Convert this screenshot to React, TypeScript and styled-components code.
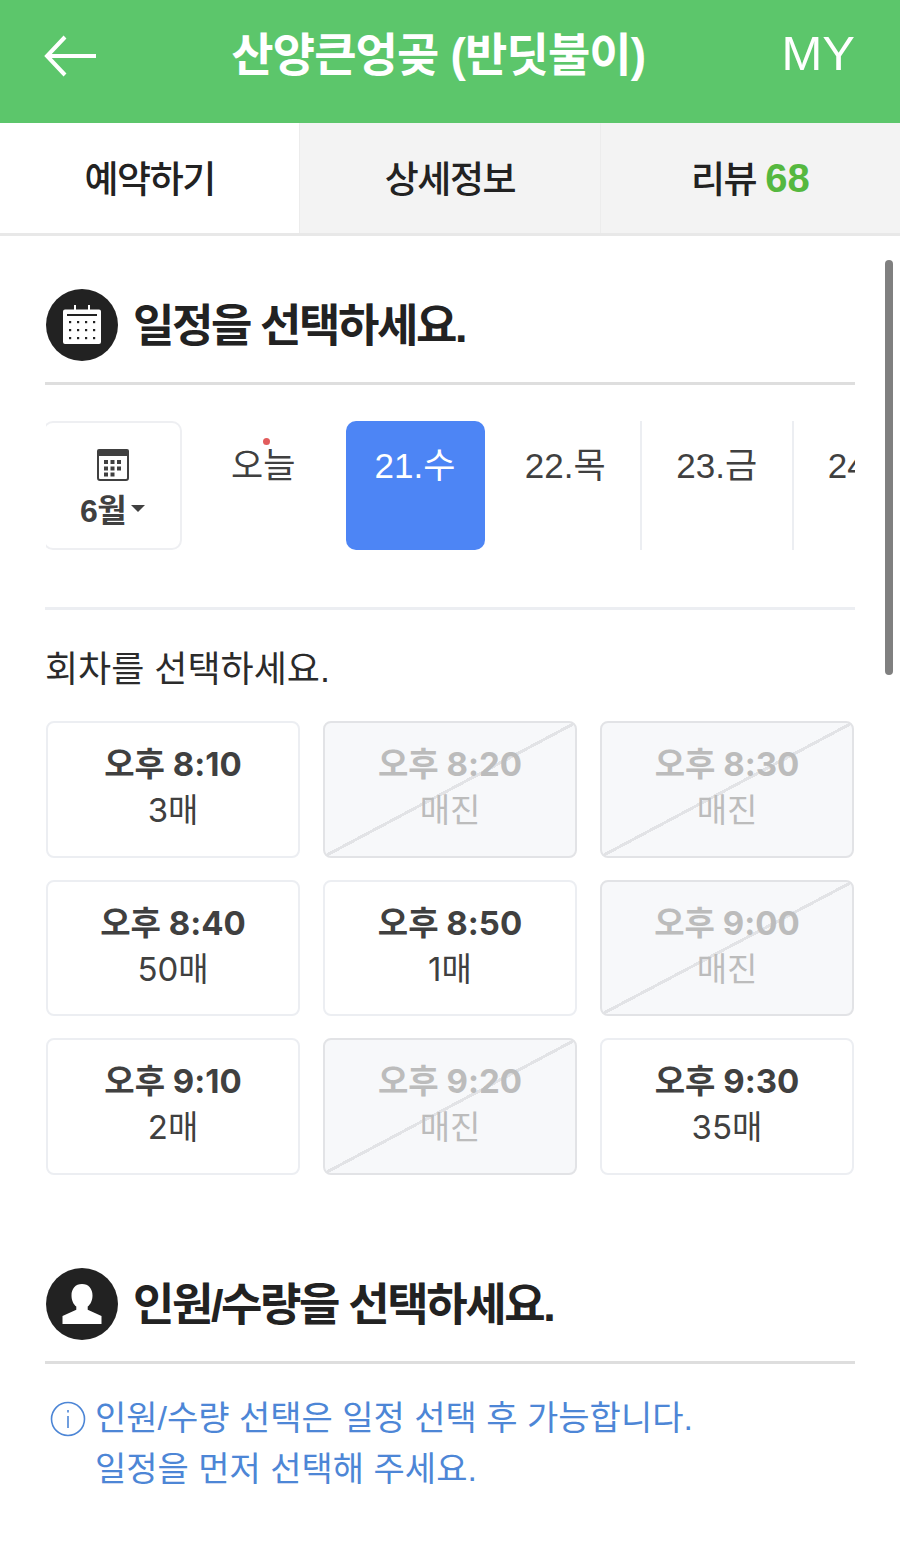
import React from "react";
import styled, { createGlobalStyle } from "styled-components";

const FONT = `"Liberation Sans", "Noto Sans CJK KR", sans-serif`;
const NUMERIC_FONT = `Inter, "Noto Sans CJK KR", sans-serif`;

const Global = createGlobalStyle`
  html, body { margin: 0; padding: 0; background: #fff; }
  body { font-family: ${FONT}; overflow: hidden; }
  * { box-sizing: border-box; }
`;

const Page = styled.div`
  position: relative;
  width: 900px;
  height: 1548px;
  overflow: hidden;
  background: #fff;
`;

const Header = styled.header`
  height: 123px;
  background: #5cc66b;
  display: flex;
  align-items: center;
  justify-content: space-between;
  padding: 0 45px 14px 44px;
  color: #fff;
`;

const BackIcon = styled.svg`
  width: 52px;
  height: 42px;
  flex: none;
  margin-top: 3px;
`;

const HeaderTitle = styled.h1`
  margin: 0 0 0 -1px;
  font-size: 46px;
  font-weight: 700;
  letter-spacing: -0.85px;
  line-height: 60px;
`;

const MyLabel = styled.span`
  font-size: 49px;
  line-height: 60px;
  margin-top: -4px;
`;

const Tabs = styled.nav`
  display: flex;
  height: 113px;
  border-bottom: 3px solid #e8e8e8;
`;

const Tab = styled.div<{ $active?: boolean }>`
  flex: 1;
  display: flex;
  align-items: center;
  justify-content: center;
  gap: 9px;
  padding-bottom: 4px;
  font-size: 37px;
  font-weight: 500;
  letter-spacing: -1.4px;
  color: #222;
  background: ${(p) => (p.$active ? "#fff" : "#f3f3f3")};
  border-top: 1px solid ${(p) => (p.$active ? "#fff" : "#f3f3f3")};
  & + & {
    border-left: 1px solid #ececec;
  }
`;

const TabCount = styled.span`
  color: #55b83f;
  font-weight: 700;
  font-size: 40px;
  letter-spacing: 0;
  margin-top: 3px;
`;

const Content = styled.main`
  padding: 53px 45px 0;
`;

const SectionHead = styled.div`
  display: flex;
  align-items: center;
  gap: 15px;
  padding-bottom: 21px;
  border-bottom: 3px solid #dedede;
`;

const HeadIcon = styled.span`
  width: 72px;
  height: 72px;
  flex: none;
  border-radius: 50%;
  background: #222;
  display: flex;
  align-items: center;
  justify-content: center;
  margin-left: 1px;
`;

const SectionTitle = styled.h2`
  margin: 0;
  padding-top: 3px;
  font-size: 45px;
  line-height: 60px;
  font-weight: 700;
  letter-spacing: -2.4px;
  color: #222;
`;

const DateStrip = styled.div`
  display: flex;
  height: 129px;
  margin-top: 36px;
  margin-left: 1px;
  overflow: hidden;
`;

const MonthBox = styled.div`
  flex: none;
  width: 139px;
  margin-left: -3px;
  margin-right: 4px;
  border: 2px solid #eeeff2;
  border-radius: 10px;
  display: flex;
  flex-direction: column;
  align-items: center;
  padding-top: 25px;
  color: #404040;
`;

const MonthLabel = styled.div`
  display: flex;
  align-items: center;
  gap: 5px;
  margin-top: 11px;
  font-size: 32px;
  line-height: 38px;
  font-weight: 700;
  letter-spacing: -0.5px;
`;

const Caret = styled.span`
  width: 0;
  height: 0;
  border-left: 7px solid transparent;
  border-right: 7px solid transparent;
  border-top: 7px solid #404040;
  margin-bottom: 5px;
`;

const DayCell = styled.div<{ $divider?: boolean; $today?: boolean }>`
  flex: none;
  width: 151.5px;
  display: flex;
  justify-content: center;
  padding-top: 22px;
  padding-left: ${(p) => (p.$today ? "5px" : "0")};
  font-size: 35px;
  line-height: 46px;
  color: #404040;
  border-right: 2px solid ${(p) => (p.$divider ? "#eceef2" : "transparent")};
`;

const SelectedDay = styled.div`
  flex: none;
  width: 139px;
  margin: 0 6px 0 8px;
  padding-top: 22px;
  border-radius: 10px;
  background: #4d85f5;
  color: #fff;
  text-align: center;
  font-size: 35px;
  line-height: 46px;
`;

const TodayMark = styled.span`
  position: relative;
  &::before {
    content: "";
    position: absolute;
    top: -5px;
    left: 32px;
    width: 7px;
    height: 7px;
    border-radius: 50%;
    background: #e25c5c;
  }
`;

const ThinRule = styled.div`
  height: 3px;
  margin-top: 57px;
  background: #eceef2;
`;

const SubTitle = styled.p`
  margin: 36px 0 0;
  font-size: 36px;
  line-height: 48px;
  color: #2b2b2b;
  letter-spacing: 0;
`;

const SessionGrid = styled.div`
  display: grid;
  grid-template-columns: repeat(3, 1fr);
  grid-auto-rows: 136.5px;
  gap: 22px 23px;
  margin: 27px 1px 0 1px;
`;

const Session = styled.div<{ $off?: boolean }>`
  border: 2px solid ${(p) => (p.$off ? "#e2e3e6" : "#eceef2")};
  border-radius: 8px;
  display: flex;
  flex-direction: column;
  align-items: center;
  padding-top: 18px;
  color: ${(p) => (p.$off ? "#bcbcbc" : "#404040")};
  background: ${(p) =>
    p.$off
      ? `linear-gradient(to bottom right, #f7f8fa calc(50% - 1.5px), #e2e3e6 calc(50% - 1.5px), #e2e3e6 calc(50% + 1.5px), #f7f8fa calc(50% + 1.5px))`
      : "#fff"};
`;

const SessionTime = styled.div`
  font-family: ${NUMERIC_FONT};
  font-size: 33px;
  line-height: 46px;
  font-weight: 700;
`;

const SessionSeats = styled.div`
  font-family: ${NUMERIC_FONT};
  font-size: 33px;
  line-height: 46px;
  font-weight: 400;
`;

const SecondHead = styled(SectionHead)`
  margin-top: 93.5px;
`;

const Notice = styled.div`
  display: flex;
  gap: 9px;
  margin: 29px 0 0 5px;
  color: #4d86d6;
  font-size: 34px;
  line-height: 51px;
  letter-spacing: 0;
`;

const InfoIcon = styled.svg`
  width: 36px;
  height: 36px;
  flex: none;
  margin-top: 8px;
`;

const Scrollbar = styled.div`
  position: absolute;
  left: 885px;
  top: 260px;
  width: 8px;
  height: 415px;
  border-radius: 4px;
  background: #808080;
`;

const CalendarWhite = () => (
  <svg width="40" height="40" viewBox="0 0 40 40" aria-hidden="true">
    <path d="M1 6.5a2 2 0 0 1 2-2h34a2 2 0 0 1 2 2V37a2 2 0 0 1-2 2H3a2 2 0 0 1-2-2z" fill="#fff" />
    <rect x="12" y="0" width="2" height="6" fill="#fff" />
    <rect x="26" y="0" width="2" height="6" fill="#fff" />
    <rect x="5" y="9" width="30" height="2" fill="#222" />
    {[16, 24, 32].map((y) =>
      [7, 15, 23, 31].map((x) => <rect key={`${x}-${y}`} x={x} y={y} width="2.2" height="2.2" fill="#222" />)
    )}
  </svg>
);

const CalendarDark = () => (
  <svg width="32" height="33" viewBox="0 0 32 33" aria-hidden="true">
    <path d="M0 3a2 2 0 0 1 2-2h28a2 2 0 0 1 2 2v5H0z" fill="#404040" />
    <path d="M1 7h30v23a2 2 0 0 1-2 2H3a2 2 0 0 1-2-2z" fill="#fff" stroke="#404040" strokeWidth="2" />
    {[12, 18.5, 24.5].map((y) =>
      [7, 13.5, 20].map((x) =>
        y === 24.5 && x === 20 ? null : <rect key={`${x}-${y}`} x={x} y={y} width="4" height="4" fill="#404040" />
      )
    )}
  </svg>
);

const PersonIcon = () => (
  <svg width="42" height="42" viewBox="0 0 42 42" aria-hidden="true">
    <path
      d="M21 1c6.600 0 10.500 4.800 10.500 11.500 0 4.800-2 9-4.800 11v3.200L40.500 33v8h-39v-8l13.800-6.300v-3.200c-2.800-2-4.800-6.200-4.800-11C10.500 5.800 14.400 1 21 1z"
      fill="#fff"
    />
  </svg>
);

const sessions = [
  { time: "오후 8:10", seats: "3매" },
  { time: "오후 8:20", off: true },
  { time: "오후 8:30", off: true },
  { time: "오후 8:40", seats: "50매" },
  { time: "오후 8:50", seats: "1매" },
  { time: "오후 9:00", off: true },
  { time: "오후 9:10", seats: "2매" },
  { time: "오후 9:20", off: true },
  { time: "오후 9:30", seats: "35매" },
];

export default function App() {
  return (
    <Page>
      <Global />
      <Header>
        <BackIcon viewBox="0 0 52 42" fill="none" stroke="#fff" strokeWidth="4" aria-hidden="true">
          <path d="M52 21H3" />
          <path d="M21 2 3 21l18 19" />
        </BackIcon>
        <HeaderTitle>산양큰엉곶 (반딧불이)</HeaderTitle>
        <MyLabel>MY</MyLabel>
      </Header>
      <Tabs>
        <Tab $active>예약하기</Tab>
        <Tab>상세정보</Tab>
        <Tab>
          리뷰<TabCount>68</TabCount>
        </Tab>
      </Tabs>
      <Content>
        <SectionHead>
          <HeadIcon>
            <CalendarWhite />
          </HeadIcon>
          <SectionTitle>일정을 선택하세요.</SectionTitle>
        </SectionHead>
        <DateStrip>
          <MonthBox>
            <CalendarDark />
            <MonthLabel>
              6월
              <Caret />
            </MonthLabel>
          </MonthBox>
          <DayCell $today>
            <TodayMark>오늘</TodayMark>
          </DayCell>
          <SelectedDay>21.수</SelectedDay>
          <DayCell $divider>22.목</DayCell>
          <DayCell $divider>23.금</DayCell>
          <DayCell>24.토</DayCell>
        </DateStrip>
        <ThinRule />
        <SubTitle>회차를 선택하세요.</SubTitle>
        <SessionGrid>
          {sessions.map((s) => (
            <Session key={s.time} $off={s.off}>
              <SessionTime>{s.time}</SessionTime>
              <SessionSeats>{s.off ? "매진" : s.seats}</SessionSeats>
            </Session>
          ))}
        </SessionGrid>
        <SecondHead>
          <HeadIcon>
            <PersonIcon />
          </HeadIcon>
          <SectionTitle>인원/수량을 선택하세요.</SectionTitle>
        </SecondHead>
        <Notice>
          <InfoIcon viewBox="0 0 36 36" fill="none" stroke="#4d86d6" strokeWidth="1.6" aria-hidden="true">
            <circle cx="18" cy="18" r="16.5" />
            <path d="M18 15v12M18 9v2.5" />
          </InfoIcon>
          <div>
            인원/수량 선택은 일정 선택 후 가능합니다.
            <br />
            일정을 먼저 선택해 주세요.
          </div>
        </Notice>
      </Content>
      <Scrollbar />
    </Page>
  );
}
